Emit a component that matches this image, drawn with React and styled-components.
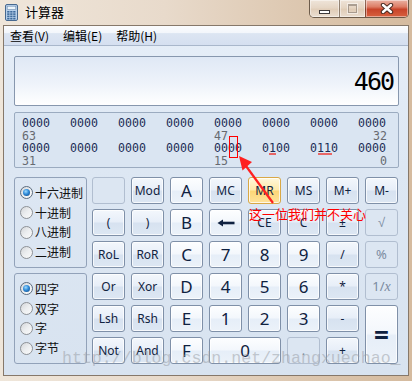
import React from 'react'
import styled, { createGlobalStyle, css } from 'styled-components'

const GlobalStyle = createGlobalStyle`
  html, body { margin: 0; padding: 0; }
  body {
    width: 412px;
    height: 381px;
    overflow: hidden;
    font-family: "Noto Sans", "Noto Sans CJK SC", sans-serif;
  }
`

const Window = styled.div`
  position: relative;
  width: 412px;
  height: 381px;
  box-sizing: border-box;
  padding: 0 3px 5px 3px;
  display: flex;
  flex-direction: column;
  background: linear-gradient(90deg, #efe6da 0%, #e8dacb 40%, #dcc6ae 75%, #d5bb9f 100%);
`

const TitleBar = styled.div`
  height: 25px;
  display: flex;
  align-items: flex-start;
  flex-shrink: 0;
`

const Title = styled.span`
  margin: 4px 0 0 7px;
  font: 13px/16px "Noto Sans CJK SC", sans-serif;
  color: #000;
  text-shadow: 0 0 6px rgba(255, 255, 255, 0.9), 0 0 10px rgba(255, 255, 255, 0.7);
`

const IconWrap = styled.div`
  margin: 4px 0 0 2px;
  line-height: 0;
`

const CaptionGroup = styled.div`
  margin-left: auto;
  display: flex;
  height: 17px;
  border: 1px solid rgba(72, 56, 42, 0.75);
  border-top: none;
  border-radius: 0 0 5px 5px;
  overflow: hidden;
`

const CaptionButton = styled.div`
  width: ${p => p.$w}px;
  height: 17px;
  display: flex;
  align-items: center;
  justify-content: center;
  border-left: ${p => (p.$first ? 'none' : '1px solid rgba(72, 56, 42, 0.55)')};
  background: ${p =>
    p.$close
      ? 'linear-gradient(#eab3a4 0%, #dd7d66 40%, #c8442a 55%, #d7613f 100%)'
      : 'linear-gradient(rgba(255,255,255,0.55) 0%, rgba(255,255,255,0.3) 45%, rgba(235,222,208,0.35) 55%, rgba(255,255,255,0.45) 100%)'};
  box-shadow: inset 0 0 0 1px rgba(255, 255, 255, 0.45);
`

const MinGlyph = styled.div`
  width: 9px;
  height: 2px;
  margin-top: 6px;
  background: #fff;
  border: 1px solid #3d3a3a;
`

const MaxGlyph = styled.div`
  width: 7px;
  height: 6px;
  border: 1px solid rgba(120, 110, 100, 0.55);
  border-top-width: 2px;
  box-shadow: 0 0 0 1px rgba(255, 255, 255, 0.5);
`

const Client = styled.div`
  flex: 1;
  display: flex;
  flex-direction: column;
  border: 1px solid #86786a;
  background: linear-gradient(#e6eef8 0%, #dde7f3 40%, #d8e3f0 100%);
`

const MenuBar = styled.div`
  height: 19px;
  display: flex;
  align-items: center;
  gap: 14px;
  padding-left: 6px;
  border-bottom: 1px solid #a9b7cb;
  background: linear-gradient(#fbfcfe 0%, #f3f6fb 35%, #dce5f2 40%, #d5dff0 100%);
`

const MenuItem = styled.span`
  font: 12px/19px "Noto Sans CJK SC", sans-serif;
  color: #000;
`

const Panel = styled.div`
  padding: 10px 9px 0 10px;
  display: flex;
  flex-direction: column;
`

const Display = styled.div`
  height: 50px;
  box-sizing: border-box;
  border: 1px solid #8797ae;
  border-radius: 2px;
  display: flex;
  align-items: center;
  justify-content: flex-end;
  padding-right: 5px;
  background: linear-gradient(#dfe8f5 0%, #eef3fa 55%, #ffffff 100%);
  font: 25px/1 "DejaVu Sans Mono", monospace;
  letter-spacing: -2px;
  color: #000;
`

const BitsBox = styled.div`
  margin-top: 6px;
  height: 56px;
  box-sizing: border-box;
  border: 1px solid #9babc0;
  border-radius: 2px;
  padding: 4px 0 0 7px;
  background: #dae5f2;
  display: grid;
  grid-template-columns: repeat(8, 29px);
  column-gap: 19px;
  grid-auto-rows: 12.5px;
  font: 11.6px/12.5px "DejaVu Sans Mono", monospace;
`

const Nibble = styled.span`
  color: #1a2d55;
  white-space: nowrap;
`

const BitLabel = styled.span`
  color: #666a70;
  grid-column: ${p => p.$col};
  justify-self: ${p => (p.$end ? 'end' : 'start')};
`

const Keypad = styled.div`
  margin-top: 9px;
  display: flex;
  gap: 5px;
`

const RadioColumn = styled.div`
  width: 73px;
  display: flex;
  flex-direction: column;
  gap: 5px;
`

const GroupBox = styled.div`
  height: 91px;
  box-sizing: border-box;
  border: 1px solid #92a2b9;
  border-radius: 3px;
  padding: 0 0 0 5px;
  display: flex;
  flex-direction: column;
  justify-content: center;
`

const RadioRow = styled.label`
  height: 19.8px;
  display: flex;
  align-items: center;
  gap: 2px;
  font: 12px/1 "Noto Sans CJK SC", sans-serif;
  color: #111;
  white-space: nowrap;
`

const RadioDot = styled.span`
  position: relative;
  width: 11px;
  height: 11px;
  flex-shrink: 0;
  border-radius: 50%;
  border: 1px solid #8d9196;
  background: linear-gradient(135deg, #d4d6d9 0%, #eceef0 50%, #fbfbfb 100%);
  ${p =>
    p.$on &&
    css`
      border-color: #5b6b7e;
      &::after {
        content: '';
        position: absolute;
        left: 2px;
        top: 2px;
        width: 7px;
        height: 7px;
        border-radius: 50%;
        background: radial-gradient(circle at 40% 35%, #9fdcff 0%, #2f8ad8 45%, #0d3f78 100%);
      }
    `}
`

const KeyGrid = styled.div`
  display: grid;
  grid-template-columns: repeat(8, 33px);
  grid-template-rows: repeat(6, 27px);
  column-gap: 6px;
  row-gap: 5px;
`

const faces = {
  digit: css`
    background: linear-gradient(#fdfeff 0%, #f3f7fc 48%, #e6eef8 52%, #ecf2f9 100%);
    color: #0f2140;
    font-size: 17px;
  `,
  op: css`
    background: linear-gradient(#f3f7fc 0%, #e7eef8 48%, #d7e2f0 52%, #dde7f3 100%);
    color: #11233f;
    font-size: 12px;
  `,
  mem: css`
    background: linear-gradient(#fff7da 0%, #ffeaaa 48%, #fdd676 52%, #fee39c 100%);
    border-color: #d9a846 !important;
    color: #11233f;
    font-size: 12px;
  `,
  off: css`
    background: #dce6f2;
    border-color: #b1bed0 !important;
    box-shadow: none !important;
    color: #7a8aa0;
    font-size: 13px;
  `,
}

const Key = styled.div`
  grid-column: span ${p => p.$cols || 1};
  grid-row: span ${p => p.$rows || 1};
  box-sizing: border-box;
  border: 1px solid #7f90a8;
  border-radius: 3px;
  box-shadow: inset 0 0 0 1px rgba(255, 255, 255, 0.75);
  display: flex;
  align-items: center;
  justify-content: center;
  font-family: "Noto Sans", sans-serif;
  line-height: 1;
  white-space: nowrap;
  ${p => faces[p.$face]}
  ${p => p.$big && css`font-size: 26px; font-weight: 700;`}
`

const Italic = styled.i`
  font-family: "Liberation Serif", serif;
  font-size: 14px;
`

const Overlay = styled.svg`
  position: absolute;
  left: 0;
  top: 0;
  pointer-events: none;
`

const Note = styled.span`
  position: absolute;
  left: 249px;
  top: 206px;
  font: 13px/16px "Noto Sans CJK SC", sans-serif;
  color: #ff0000;
  white-space: nowrap;
`

const Watermark = styled.span`
  position: absolute;
  left: 62px;
  top: 350px;
  font: 16.6px/17px "Liberation Mono", monospace;
  color: rgba(150, 155, 162, 0.5);
  white-space: nowrap;
  pointer-events: none;
`

const AppIcon = () => (
  <svg width="13" height="17" viewBox="0 0 13 17">
    <rect x="0.5" y="0.5" width="12" height="16" rx="1.5" fill="#b7d0ea" stroke="#47698f" />
    <rect x="2.2" y="2.2" width="8.6" height="3.4" fill="#eef6fc" stroke="#6c8bad" strokeWidth="0.6" />
    {[0, 1, 2, 3].map(r =>
      [0, 1, 2].map(c => (
        <rect key={r + '-' + c} x={2.2 + c * 3} y={7 + r * 2.3} width="2.3" height="1.6" fill="#3f6b9c" />
      ))
    )}
  </svg>
)

const CloseGlyph = () => (
  <svg width="14" height="11" viewBox="0 0 14 11">
    <path d="M3 2 L11 9 M11 2 L3 9" stroke="#4a2b22" strokeWidth="4.4" strokeLinecap="round" />
    <path d="M3 2 L11 9 M11 2 L3 9" stroke="#fff" strokeWidth="2.4" strokeLinecap="round" />
  </svg>
)

const BackArrow = () => (
  <svg width="18" height="8" viewBox="0 0 18 8">
    <path d="M5 4 H17.5" stroke="#0f2140" strokeWidth="2.6" />
    <path d="M0.5 4 L6 0.5 L6 7.5 Z" fill="#0f2140" />
  </svg>
)

const radios1 = ['十六进制', '十进制', '八进制', '二进制']
const radios2 = ['四字', '双字', '字', '字节']

const keys = [
  { l: '', f: 'off' }, { l: 'Mod', f: 'op' }, { l: 'A', f: 'digit' }, { l: 'MC', f: 'op' },
  { l: 'MR', f: 'mem' }, { l: 'MS', f: 'op' }, { l: 'M+', f: 'op' }, { l: 'M-', f: 'op' },
  { l: '(', f: 'op' }, { l: ')', f: 'op' }, { l: 'B', f: 'digit' }, { l: 'back', f: 'digit' },
  { l: 'CE', f: 'op' }, { l: 'C', f: 'op' }, { l: '±', f: 'op' }, { l: '√', f: 'off' },
  { l: 'RoL', f: 'op' }, { l: 'RoR', f: 'op' }, { l: 'C', f: 'digit' }, { l: '7', f: 'digit' },
  { l: '8', f: 'digit' }, { l: '9', f: 'digit' }, { l: '/', f: 'op' }, { l: '%', f: 'off' },
  { l: 'Or', f: 'op' }, { l: 'Xor', f: 'op' }, { l: 'D', f: 'digit' }, { l: '4', f: 'digit' },
  { l: '5', f: 'digit' }, { l: '6', f: 'digit' }, { l: '*', f: 'op' }, { l: 'inv', f: 'off' },
  { l: 'Lsh', f: 'op' }, { l: 'Rsh', f: 'op' }, { l: 'E', f: 'digit' }, { l: '1', f: 'digit' },
  { l: '2', f: 'digit' }, { l: '3', f: 'digit' }, { l: '-', f: 'op' }, { l: '=', f: 'digit', rows: 2, big: true },
  { l: 'Not', f: 'op' }, { l: 'And', f: 'op' }, { l: 'F', f: 'digit' }, { l: '0', f: 'digit', cols: 2 },
  { l: '.', f: 'off' }, { l: '+', f: 'op' },
]

const keyLabel = l => {
  if (l === 'back') return <BackArrow />
  if (l === 'inv') return <span>1/<Italic>x</Italic></span>
  return l
}

const nibbles = ['0000', '0000', '0000', '0000', '0000', '0000', '0000', '0000']
const nibbles2 = ['0000', '0000', '0000', '0000', '0000', '0100', '0110', '0000']

export default function App() {
  return (
    <>
      <GlobalStyle />
      <Window>
        <TitleBar>
          <IconWrap><AppIcon /></IconWrap>
          <Title>计算器</Title>
          <CaptionGroup>
            <CaptionButton $w={29} $first><MinGlyph /></CaptionButton>
            <CaptionButton $w={25}><MaxGlyph /></CaptionButton>
            <CaptionButton $w={42} $close><CloseGlyph /></CaptionButton>
          </CaptionGroup>
        </TitleBar>
        <Client>
          <MenuBar>
            <MenuItem>查看(V)</MenuItem>
            <MenuItem>编辑(E)</MenuItem>
            <MenuItem>帮助(H)</MenuItem>
          </MenuBar>
          <Panel>
            <Display>460</Display>
            <BitsBox>
              {nibbles.map((n, i) => <Nibble key={'a' + i}>{n}</Nibble>)}
              <BitLabel $col={1}>63</BitLabel>
              <BitLabel $col={5}>47</BitLabel>
              <BitLabel $col={8} $end>32</BitLabel>
              {nibbles2.map((n, i) => <Nibble key={'b' + i}>{n}</Nibble>)}
              <BitLabel $col={1}>31</BitLabel>
              <BitLabel $col={5}>15</BitLabel>
              <BitLabel $col={8} $end>0</BitLabel>
            </BitsBox>
            <Keypad>
              <RadioColumn>
                <GroupBox>
                  {radios1.map((r, i) => (
                    <RadioRow key={r}><RadioDot $on={i === 0} />{r}</RadioRow>
                  ))}
                </GroupBox>
                <GroupBox>
                  {radios2.map((r, i) => (
                    <RadioRow key={r}><RadioDot $on={i === 0} />{r}</RadioRow>
                  ))}
                </GroupBox>
              </RadioColumn>
              <KeyGrid>
                {keys.map((k, i) => (
                  <Key key={i} $face={k.f} $cols={k.cols} $rows={k.rows} $big={k.big}>
                    {keyLabel(k.l)}
                  </Key>
                ))}
              </KeyGrid>
            </Keypad>
          </Panel>
        </Client>

        <Watermark>http://blog.csdn.net/zhangxuechao_</Watermark>
        <Overlay width="412" height="381" viewBox="0 0 412 381">
          <rect x="229.5" y="136.5" width="8" height="21" fill="none" stroke="#ff0000" strokeWidth="1" />
          <rect x="269" y="153" width="7" height="2" fill="#e86666" />
          <rect x="318" y="153" width="14" height="2" fill="#e86666" />
          <path d="M246 166 L273 203" stroke="#ff2020" strokeWidth="2.2" />
          <path d="M239 156 L252 162 L242.5 170.5 Z" fill="#ff2020" />
        </Overlay>
        <Note>这一位我们并不关心</Note>
      </Window>
    </>
  )
}
